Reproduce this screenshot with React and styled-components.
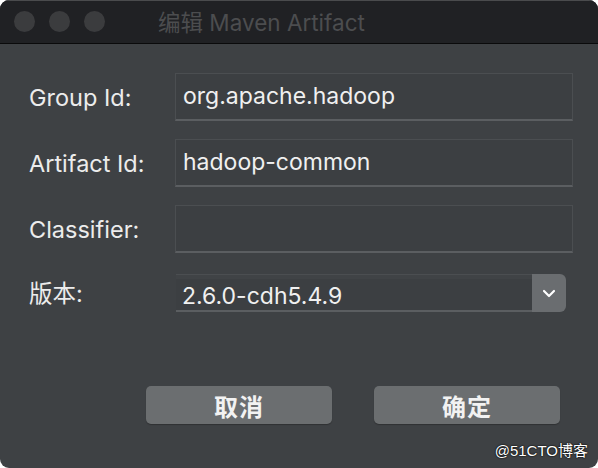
import React from 'react'
import styled, { createGlobalStyle } from 'styled-components';

const GlobalStyle = createGlobalStyle`
  html, body {
    margin: 0;
    padding: 0;
    background: #ffffff;
  }
  body {
    font-family: "Inter", "Noto Sans CJK SC", sans-serif;
  }
`

function App() {
  return (
    <>
      <GlobalStyle />
      <Window>
        <TitleBar>
          <Lights>
            <Light />
            <Light />
            <Light />
          </Lights>
          <Title>编辑 Maven Artifact</Title>
        </TitleBar>
        <Body>
          <Form>
            <Label>Group Id:</Label>
            <Field>org.apache.hadoop</Field>
            <Label>Artifact Id:</Label>
            <Field>hadoop-common</Field>
            <Label>Classifier:</Label>
            <Field />
            <Label>版本:</Label>
            <Select>
              <SelectValue>2.6.0-cdh5.4.9</SelectValue>
              <SelectArrow>
                <svg width="14" height="9" viewBox="0 0 14 9">
                  <path d="M2 2 L7 7 L12 2" fill="none" stroke="#ffffff" strokeWidth="2.2" strokeLinecap="round" strokeLinejoin="round" />
                </svg>
              </SelectArrow>
            </Select>
          </Form>
          <Buttons>
            <Button>取消</Button>
            <Button>确定</Button>
          </Buttons>
          <Watermark>@51CTO博客</Watermark>
        </Body>
      </Window>
    </>
  )
}

export default App;

const Window = styled.div`
  width: 598px;
  height: 468px;
  border-radius: 9px;
  overflow: hidden;
  display: flex;
  flex-direction: column;
  background: #3e4144;
`

const TitleBar = styled.div`
  flex-shrink: 0;
  background: #202124;
  border-top: 1px solid #4a4b4d;
  border-bottom: 1px solid #0a0a0b;
  box-sizing: border-box;
  height: 44px;
  position: relative;
  display: flex;
  align-items: center;
  padding-left: 158px;
`

const Lights = styled.div`
  position: absolute;
  left: 14px;
  top: 10px;
  display: flex;
  gap: 14px;
`

const Light = styled.div`
  width: 21px;
  height: 21px;
  border-radius: 50%;
  background: #3b3c3e;
`

const Title = styled.div`
  font-size: 22.5px;
  color: #4c4d4f;
  margin-top: -2px;
`

const Body = styled.div`
  flex: 1;
  position: relative;
  padding: 29px 0 0 0;
`

const Form = styled.div`
  display: grid;
  grid-template-columns: 146px 398px;
  row-gap: 18px;
  padding-left: 29px;
  align-items: center;
`

const Label = styled.div`
  font-size: 23.5px;
  color: #ececec;
`

const Field = styled.div`
  height: 48px;
  box-sizing: border-box;
  background: #3c3f42;
  border: 1px solid #4b4e51;
  border-bottom: 2px solid #5b5e61;
  padding-left: 7px;
  display: flex;
  align-items: center;
  font-size: 23px;
  color: #f0f0f0;
  padding-bottom: 2px;
`

const Select = styled.div`
  margin-top: 3px;
  margin-left: 1px;
  width: 390px;
  height: 38px;
  display: flex;
`

const SelectValue = styled.div`
  flex: 1;
  box-sizing: border-box;
  background: #3c3f42;
  border-top: 1px solid #4b4e51;
  border-bottom: 2px solid #5b5e61;
  box-shadow: inset 0 4px 0 #404346;
  padding: 6px 0 0 6px;
  display: flex;
  align-items: center;
  font-size: 23px;
  color: #f0f0f0;
`

const SelectArrow = styled.div`
  width: 34px;
  background: #6a6d70;
  border-radius: 0 6px 6px 0;
  display: flex;
  align-items: center;
  justify-content: center;
`

const Buttons = styled.div`
  display: flex;
  gap: 42px;
  margin-top: 74px;
  padding-left: 146px;
`

const Button = styled.div`
  width: 186px;
  height: 38px;
  border-radius: 5px;
  background: #6b6e70;
  box-shadow: 0 1px 1px rgba(0, 0, 0, 0.25);
  display: flex;
  align-items: center;
  justify-content: center;
  font-size: 24px;
  font-weight: 700;
  color: #f2f2f2;
  letter-spacing: 1px;
`

const Watermark = styled.div`
  position: absolute;
  right: 10px;
  bottom: 8px;
  font-family: "Liberation Sans", "Noto Sans CJK SC", sans-serif;
  font-size: 15px;
  color: #ffffff;
  text-shadow: 0 0 2px #000, 0 0 1px #000;
`
